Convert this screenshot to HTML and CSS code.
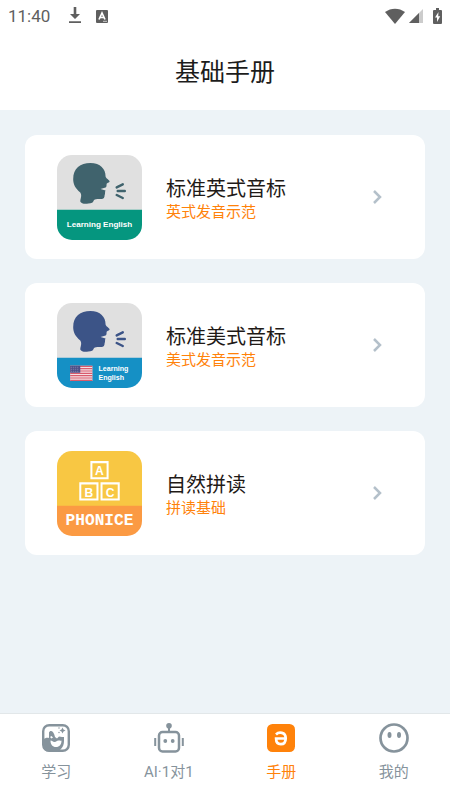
FILE: index.html
```html
<!DOCTYPE html>
<html lang="zh-CN">
<head>
<meta charset="utf-8">
<meta name="viewport" content="width=device-width, initial-scale=1">
<title>基础手册</title>
<link rel="stylesheet" href="styles.css">
</head>
<body>
<svg class="defs" width="0" height="0" aria-hidden="true">
  <symbol id="speaker" viewBox="0 0 84 54">
    <path fill="currentColor" d="M23 46c0-3 2-6 0-9-5-4-7-8-7-13C16 13 23 8 33 8c10 0 15 6 15 13 0 2 3 3 4 5 0 1.500-3 1.500-3 3s0 3-1 3l-5 1.500 5 1.500c-1 1 0 3-1 5 0 3-2 3.500-4 3.500-4 0-6 0-7 2 0 1.500-2 2-5 2.500-3 .5-7 .5-8-2z"/>
    <path fill="none" stroke="currentColor" stroke-width="2.400" stroke-linecap="round" d="M59 32l6-3M60 35.500h7M59 39.500l6 3"/>
  </symbol>
</svg>
<div class="app">
  <div class="status">
    <span class="time">11:40</span>
    <svg class="download" width="14" height="18" viewBox="0 0 14 18"><path fill="currentColor" d="M5.700 0h2.600v7H12l-5 5-5-5h3.700zM1 14.300h12v1.700H1z"/></svg>
    <svg class="notice" width="12" height="13" viewBox="0 0 12 13"><rect width="12" height="13" rx="1" fill="currentColor"/><path d="M3 9.500L6 3l3 6.500M4 7.500h4" fill="none" stroke="#fff" stroke-width="1.700"/><path d="M7 11.300h4" stroke="#ccc"/></svg>
    <span class="spacer"></span>
    <svg width="20" height="16" viewBox="0 0 20 16"><path fill="currentColor" d="M0 4C6-.5 14-.5 20 4L10 16z"/></svg>
    <svg class="signal" width="14" height="14" viewBox="0 0 14 14"><path fill="#ccc" d="M14 0v14H0z"/><path fill="currentColor" d="M10 4v10H0z"/></svg>
    <svg class="battery" width="9" height="16" viewBox="0 0 9 16"><path fill="currentColor" d="M3 0h3v2h2q1 0 1 1v12q0 1-1 1H1q-1 0-1-1V3q0-1 1-1h2z"/><path fill="#fff" d="M5.500 4L2 9.500h2V14l3.200-5.800H5.200z"/></svg>
  </div>
  <header class="header"><h1>基础手册</h1></header>
  <main class="list">
    <a class="card" href="#british">
      <svg class="cover" viewBox="0 0 84 84" aria-hidden="true">
        <path fill="#e0e0e0" d="M0 0h84v55H0z"/><path fill="#05967f" d="M0 54h84v30H0z"/>
        <use class="teal" href="#speaker" width="84" height="54"/>
        <text class="cover-text" x="42" y="71" text-anchor="middle">Learning English</text>
      </svg>
      <span class="copy"><span class="name">标准英式音标</span><span class="note">英式发音示范</span></span>
      <svg class="chevron" viewBox="0 0 10 14"><path d="M2 1l6 6-6 6"/></svg>
    </a>
    <a class="card" href="#american">
      <svg class="cover" viewBox="0 0 84 84" aria-hidden="true">
        <path fill="#e0e0e0" d="M0 0h84v55H0z"/><path fill="#1590c5" d="M0 54h84v30H0z"/>
        <use class="navy" href="#speaker" width="84" height="54"/>
        <path fill="#f5dfe3" d="M13 62h22v15H13z"/>
        <path stroke="#d95c6c" stroke-width="1.200" d="M13 62.600h22M13 64.900h22M13 67.200h22M13 69.500h22M13 71.800h22M13 74.100h22M13 76.400h22"/>
        <path fill="#4d4f87" d="M13 62h10v7H13z"/>
        <path stroke="#9da0c0" stroke-width=".7" stroke-dasharray="1 1" d="M14 63.500h8M14 65.500h8M14 67.500h8"/>
        <text class="cover-small" x="41" y="67">Learning</text>
        <text class="cover-small" x="41" y="76">English</text>
      </svg>
      <span class="copy"><span class="name">标准美式音标</span><span class="note">美式发音示范</span></span>
      <svg class="chevron" viewBox="0 0 10 14"><path d="M2 1l6 6-6 6"/></svg>
    </a>
    <a class="card" href="#phonics">
      <svg class="cover" viewBox="0 0 84 84" aria-hidden="true">
        <path fill="#f8c743" d="M0 0h84v55H0z"/><path fill="#fb9a43" d="M0 54h84v30H0z"/>
        <g fill="none" stroke="#fff" stroke-width="2"><path d="M34 11h16v16H34zM23 32h17v16H23zM44 32h17v16H44z"/></g>
        <g class="block-text" text-anchor="middle"><text x="42" y="24">A</text><text x="31.500" y="45">B</text><text x="52.500" y="45">C</text></g>
        <text class="phonice" x="42" y="73" text-anchor="middle">PHONICE</text>
      </svg>
      <span class="copy"><span class="name">自然拼读</span><span class="note">拼读基础</span></span>
      <svg class="chevron" viewBox="0 0 10 14"><path d="M2 1l6 6-6 6"/></svg>
    </a>
  </main>
  <nav class="tabs">
    <a href="#study">
      <svg viewBox="0 0 30 30"><rect x="2.200" y="2.200" width="25.600" height="25.600" rx="6" fill="none" stroke="currentColor" stroke-width="2.400"/><path fill="currentColor" d="M2 16.500c2-1.500 4-2 6-1.500V9.500c1-3 5-2 6 4.500l2 1.500 2-2 3 .5h2v4c0 3-1 6-3 8l-3 2.500H8q-6 0-6-6zM21.500 4.500l1 2 2 1-2 1-1 2-1-2-2-1 2-1z"/><path fill="#fff" d="M9.500 17.500c2 0 2 1.500 4 1.500s2-1.500 4-1.500 2 .5 3 0c0 4-2 6.500-5.500 6.500s-5.500-2.500-5.500-6.500zM9 14l1.500-1 1.500 1.500-1.500 1z"/><circle cx="18" cy="5" r=".7" fill="currentColor"/><circle cx="18" cy="9.500" r=".7" fill="currentColor"/></svg>
      <span>学习</span>
    </a>
    <a href="#ai">
      <svg viewBox="0 0 30 30"><rect x="5" y="9" width="20" height="19.500" rx="3.500" fill="none" stroke="currentColor" stroke-width="2.500"/><path fill="none" stroke="currentColor" stroke-width="2" d="M15 4v5M1.200 15v8M28.800 15v8"/><circle cx="15" cy="2.800" r="2.800" fill="currentColor"/><circle cx="11.300" cy="18" r="1.900" fill="currentColor"/><circle cx="18.700" cy="18" r="1.900" fill="currentColor"/></svg>
      <span>AI·1对1</span>
    </a>
    <a class="active" href="#manual" aria-current="page">
      <svg viewBox="0 0 30 30"><rect x="1" y="1" width="28" height="28" rx="5.500" fill="currentColor"/><path fill="none" stroke="#fff" stroke-width="2.700" d="M10 11.500c2.800-2.800 9.700-2.600 9.700 3.700 0 3.600-1.700 6-4.900 6-3 0-4.700-2.200-4.700-5.700h9.600"/></svg>
      <span>手册</span>
    </a>
    <a href="#mine">
      <svg viewBox="0 0 30 30"><circle cx="15" cy="15" r="13.500" fill="none" stroke="currentColor" stroke-width="2.700"/><ellipse cx="10.500" cy="12" rx="2" ry="3" fill="currentColor"/><ellipse cx="20" cy="12" rx="2" ry="3" fill="currentColor"/></svg>
      <span>我的</span>
    </a>
  </nav>
</div>
</body>
</html>
```
FILE: styles.css
```css
* { box-sizing: border-box; }
body {
  margin: 0;
  background: #fff;
  font-family: Roboto, "Noto Sans CJK SC", sans-serif;
}
svg { display: block; flex: none; }
a { color: inherit; text-decoration: none; }
.defs { position: absolute; }
.app { display: flex; flex-direction: column; min-height: 100vh; }
.status {
  display: flex;
  align-items: center;
  height: 32px;
  padding: 0 8px;
  color: #5f5f5f;
}
.time { font-size: 17px; line-height: 32px; }
.download { margin-left: 18px; }
.notice { margin-left: 14px; }
.spacer { flex: 1; }
.signal { margin-left: 4px; }
.battery { margin-left: 10px; }
.header {
  display: flex;
  justify-content: center;
  height: 78px;
  padding-top: 22px;
}
h1 {
  margin: 0;
  color: #1c1c1c;
  font-size: 25px;
  font-weight: 400;
  line-height: 38px;
}
.list {
  flex: 1;
  display: flex;
  flex-direction: column;
  gap: 24px;
  padding: 25px;
  background: #edf3f7;
}
.card {
  display: flex;
  align-items: center;
  min-height: 124px;
  padding: 0 43px 0 32px;
  border-radius: 12px;
  background: #fff;
}
.cover { width: 85px; height: 85px; border-radius: 15px; }
.teal { color: #40636d; }
.navy { color: #3c5487; }
.cover text {
  fill: #fff;
  font-family: "Liberation Sans", Arial, sans-serif;
  font-weight: 700;
}
.cover .cover-text { font-size: 8px; }
.cover .cover-small { font-size: 7px; }
.cover .block-text text { font-size: 12px; }
.cover .phonice {
  font-family: "Liberation Mono", monospace;
  font-size: 16px;
}
.copy {
  flex: 1;
  display: flex;
  flex-direction: column;
  margin-left: 24px;
  padding-top: 2px;
}
.name { color: #1f1a17; font-size: 20px; line-height: 28px; }
.note { color: #ff820a; font-size: 15px; line-height: 18px; }
.chevron {
  width: 10px;
  height: 14px;
  fill: none;
  stroke: #b4c0ca;
  stroke-width: 2.5;
}
.tabs {
  display: grid;
  grid-template-columns: repeat(4, 1fr);
  height: 88px;
  border-top: 1px solid #e2e7e9;
  background: #fff;
}
.tabs a {
  display: flex;
  flex-direction: column;
  align-items: center;
  gap: 8px;
  padding-top: 9px;
  color: #86939c;
  font-size: 15px;
  line-height: 22px;
}
.tabs svg { width: 30px; height: 30px; }
.tabs .active { color: #ff820a; }
```
